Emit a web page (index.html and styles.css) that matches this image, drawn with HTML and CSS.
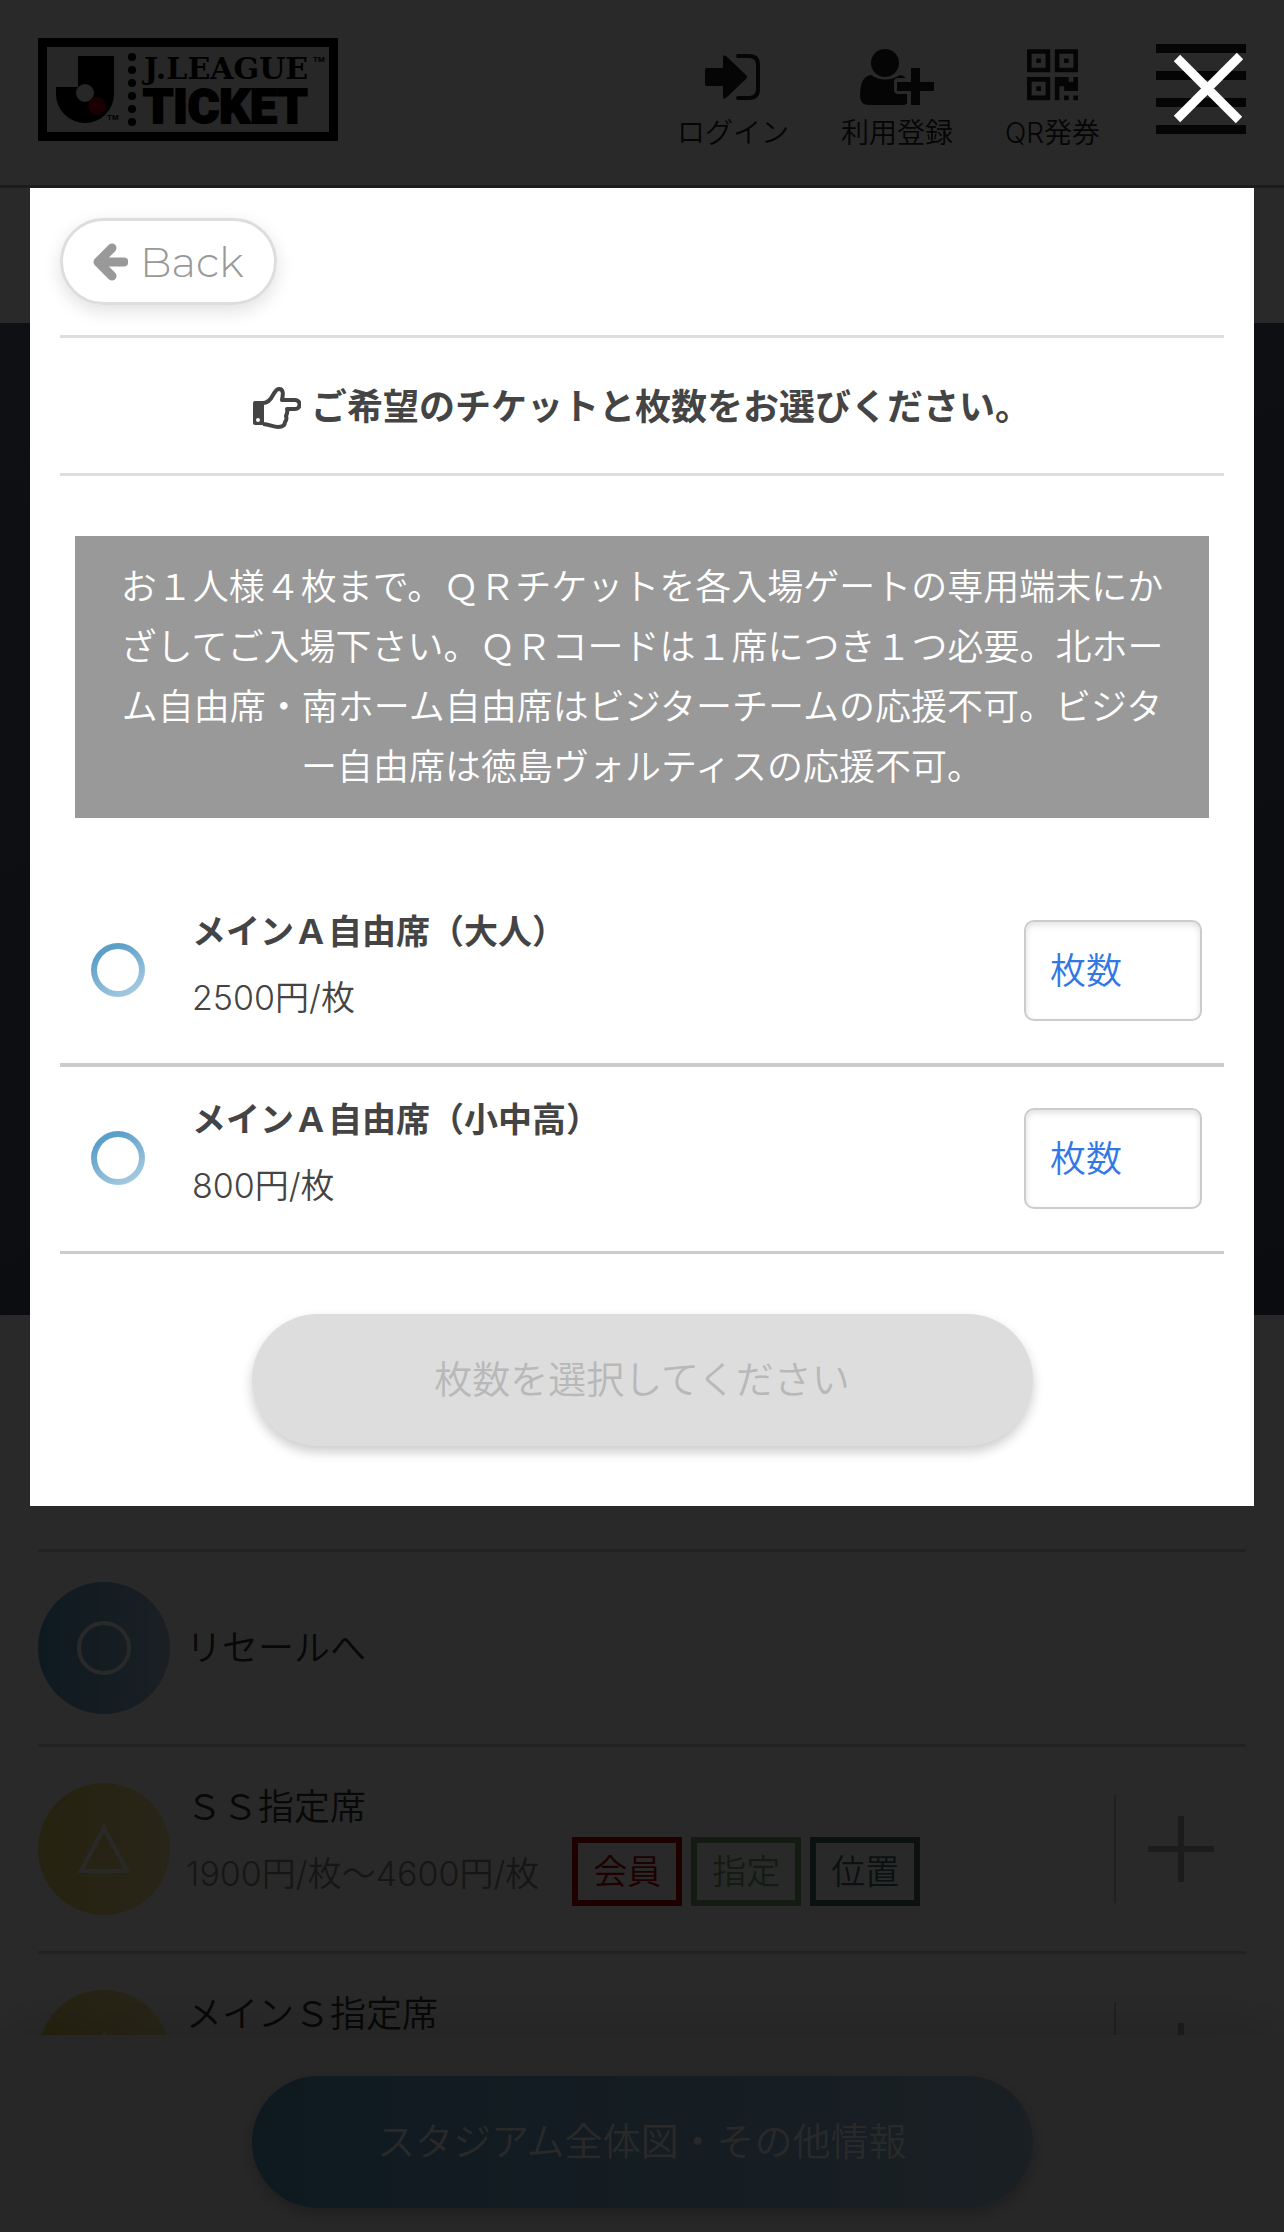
FILE: index.html
```html
<!DOCTYPE html>
<html lang="ja">
<head>
  <meta charset="UTF-8" />
  <meta name="viewport" content="width=device-width, initial-scale=1.0"/>
  <title>チケット選択 - J.LEAGUE TICKET</title>
  <link rel="stylesheet" href="styles.css">
</head>
<body>
  <header class="header">
    <a href="#" class="logo" aria-label="J.LEAGUE TICKET">
      <svg width="300" height="103" viewBox="0 0 300 103">
        <rect x="4.5" y="4.5" width="291" height="94" fill="#eee" stroke="#000" stroke-width="9"/>
        <path d="M40 18h36v38a29 29 0 0 1-58 0v-7h22z" fill="#000"/>
        <circle cx="47" cy="55" r="9" fill="#eee"/>
        <circle cx="59" cy="68" r="9" fill="#a00010"/>
        <g fill="#000">
          <circle cx="94" cy="19" r="4"/>
          <circle cx="94" cy="32" r="4"/>
          <circle cx="94" cy="45" r="4"/>
          <circle cx="94" cy="58" r="4"/>
          <circle cx="94" cy="71" r="4"/>
          <circle cx="94" cy="84" r="4"/>
        </g>
        <text x="69" y="82" class="logo-tm">TM</text>
        <text x="106" y="41" class="logo-league">J.LEAGUE</text>
        <text x="275" y="24" class="logo-tm">TM</text>
        <text x="105" y="85" class="logo-ticket">TICKET</text>
      </svg>
    </a>
    <nav class="nav">
      <a href="#" class="nav-item">
        <svg width="55" height="56" viewBox="0 -5 55 56">
          <path d="M2 14h16V3q0-3 3-1l20 19q2 2 0 4L21 44q-3 2-3-1V32H2q-2 0-2-2V16q0-2 2-2z"/>
          <path d="M33 2h11q9 0 9 9v24q0 9-9 9H33" fill="none" stroke="#222" stroke-width="4" stroke-linecap="round"/>
        </svg>
        <span>ログイン</span>
      </a>
      <a href="#" class="nav-item">
        <svg width="74" height="56" viewBox="0 0 74 56">
          <circle cx="25" cy="14" r="14"/>
          <path d="M11 26q14 9 29 0 3 0 6 3h-8q-4 0-4 4v8q0 4 4 4h9v10q-2 1-4 1H9q-9 0-9-9 0-20 11-21z"/>
          <path d="M51 19h9v14h14v9H60v14h-9V42H37v-9h14z"/>
        </svg>
        <span>利用登録</span>
      </a>
      <a href="#" class="nav-item">
        <svg width="51" height="56" viewBox="0 0 11 12">
          <path fill-rule="evenodd" d="M0 0h5v5H0zM1 1v3h3V1zM2 2h1v1H2zM6 0h5v5H6zM7 1v3h3V1zM8 2h1v1H8zM0 6h5v5H0zM1 7v3h3V7zM2 8h1v1H2zM11 6v3H8V8H7v3H6V6h3v1h1V6zM8 10h1v1H8zM10 10h1v1h-1z"/>
        </svg>
        <span>QR発券</span>
      </a>
      <button type="button" class="menu-btn" aria-label="メニュー">
        <span></span><span></span><span></span><span></span>
      </button>
    </nav>
  </header>

  <main>
    <div class="hero"></div>

    <ul class="seat-list">
      <li class="seat resale">
        <span class="mark mark-blue">
          <svg width="54" height="54" viewBox="0 0 54 54"><circle cx="27" cy="27" r="25"/></svg>
        </span>
        <div class="seat-info"><div class="seat-name">リセールへ</div></div>
      </li>
      <li class="seat">
        <span class="mark mark-yellow">
          <svg width="54" height="54" viewBox="0 0 54 54"><path d="M27 6 50 49H4z"/></svg>
        </span>
        <div class="seat-info">
          <div class="seat-name">ＳＳ指定席</div>
          <div class="seat-detail">
            <span class="seat-price">1900円/枚〜4600円/枚</span>
            <span class="tag tag-member">会員</span>
            <span class="tag tag-reserved">指定</span>
            <span class="tag tag-position">位置</span>
          </div>
        </div>
        <button type="button" class="expand" aria-label="開く">
          <svg width="66" height="66" viewBox="0 0 66 66"><path d="M33 0v66M0 33h66"/></svg>
        </button>
      </li>
      <li class="seat">
        <span class="mark mark-yellow">
          <svg width="54" height="54" viewBox="0 0 54 54"><path d="M27 6 50 49H4z"/></svg>
        </span>
        <div class="seat-info"><div class="seat-name">メインＳ指定席</div></div>
        <button type="button" class="expand" aria-label="開く">
          <svg width="66" height="66" viewBox="0 0 66 66"><path d="M33 0v66M0 33h66"/></svg>
        </button>
      </li>
    </ul>
  </main>

  <footer class="bottom-bar">
    <button type="button" class="btn btn-blue">スタジアム全体図・その他情報</button>
  </footer>

  <div class="overlay">
    <button type="button" class="close-btn" aria-label="閉じる">
      <svg width="74" height="74" viewBox="0 0 74 74"><path d="M5 6l62 62M68 4L5 67"/></svg>
    </button>

    <form class="modal" id="ticketForm">
      <div class="modal-top">
        <button type="button" class="back-btn">
          <svg width="35" height="38" viewBox="0 0 35 38">
            <path d="M19 5 5 19l14 14M7 19h24"/>
          </svg>
          Back
        </button>
      </div>

      <h2 class="modal-title">
        <svg width="48" height="42" viewBox="0 0 48 42">
          <path d="M2 14h9v24H2q-2 0-2-2V16q0-2 2-2z" fill="#444"/>
          <circle cx="5" cy="33" r="2" fill="#fff"/>
          <path d="M10 16c5 0 8-4 10-8 2-3 3-6 6-6 5 0 4 6 3 11h13c6 0 6 9 0 9h-8c1 3 0 5-1 7 1 3 0 5-1 6 0 4-3 5-7 5-5 0-9-3-15-3" fill="none" stroke="#444" stroke-width="4" stroke-linejoin="round"/>
        </svg>
        ご希望のチケットと枚数をお選びください。
      </h2>

      <p class="notice">お１人様４枚まで。ＱＲチケットを各入場ゲートの専用端末にかざしてご入場下さい。ＱＲコードは１席につき１つ必要。北ホーム自由席・南ホーム自由席はビジターチームの応援不可。ビジター自由席は徳島ヴォルティスの応援不可。</p>

      <div class="ticket">
        <input type="radio" name="ticket" id="adult" />
        <label for="adult">
          <span class="ticket-name">メインＡ自由席（大人）</span>
          <span class="ticket-price">2500円/枚</span>
        </label>
        <select aria-label="メインＡ自由席（大人）の枚数">
          <option>枚数</option>
          <option>1</option>
          <option>2</option>
          <option>3</option>
          <option>4</option>
        </select>
      </div>
      <div class="ticket">
        <input type="radio" name="ticket" id="child" />
        <label for="child">
          <span class="ticket-name">メインＡ自由席（小中高）</span>
          <span class="ticket-price">800円/枚</span>
        </label>
        <select aria-label="メインＡ自由席（小中高）の枚数">
          <option>枚数</option>
          <option>1</option>
          <option>2</option>
          <option>3</option>
          <option>4</option>
        </select>
      </div>

      <div class="modal-bottom">
        <button type="submit" class="btn" disabled>枚数を選択してください</button>
      </div>
    </form>
  </div>
</body>
</html>
```

FILE: styles.css
```css
* {
  box-sizing: border-box;
}
body {
  margin: 0;
  height: 100vh;
  overflow: hidden;
  background: #fff;
  color: #333;
  font-family: Inter, "Noto Sans CJK JP", sans-serif;
  font-size: 36px;
  font-weight: 350;
}
button, select {
  font: inherit;
  padding: 0;
  border: none;
  background: none;
  cursor: pointer;
}
svg {
  display: block;
  flex: none;
}

/* header */
.header {
  display: flex;
  justify-content: space-between;
  align-items: flex-start;
  height: 188px;
  padding: 38px 38px 0;
  border-bottom: 3px solid #b0b0b0;
}
.logo-league {
  font: bold 30px "DejaVu Serif", serif;
}
.logo-ticket {
  font: 900 48px Roboto, sans-serif;
  stroke: #000;
  stroke-width: 2;
}
.logo-tm {
  font: bold 8px "Liberation Sans", sans-serif;
}
.nav {
  display: flex;
  gap: 52px;
}
.nav-item {
  padding-top: 11px;
  color: #222;
  font-size: 28px;
  line-height: 28px;
  text-decoration: none;
}
.nav-item svg {
  margin: 0 auto 14px;
  fill: #222;
}
.menu-btn {
  display: flex;
  flex-direction: column;
  gap: 18px;
  width: 90px;
  margin-left: 4px;
  padding-top: 6px;
}
.menu-btn span {
  height: 9px;
  background: #222;
}

/* page behind the modal */
.hero {
  height: 992px;
  margin-top: 135px;
  background: linear-gradient(160deg, #5c6478, #484e60);
}
.seat-list {
  list-style: none;
  margin: 234px 38px 0;
  padding: 0;
  border-top: 3px solid #d0d0d0;
}
.seat {
  display: flex;
  align-items: flex-start;
  gap: 16px;
  padding: 36px 0;
  border-bottom: 3px solid #d0d0d0;
}
.resale {
  align-items: center;
  padding: 30px 0;
}
.mark {
  display: flex;
  align-items: center;
  justify-content: center;
  width: 132px;
  height: 132px;
  border-radius: 50%;
}
.mark svg {
  fill: none;
  stroke: #fff;
  stroke-width: 4;
}
.mark-blue {
  background: linear-gradient(90deg, #5a9fc8, #a5c4de);
}
.mark-yellow {
  background: linear-gradient(90deg, #ecd568, #f8e79c);
}
.seat-info {
  flex: 1;
}
.seat-name {
  line-height: 48px;
}
.seat-detail {
  display: flex;
  align-items: center;
  gap: 9px;
  margin-top: 6px;
}
.seat-price {
  margin-right: 24px;
  color: #888;
  font-size: 34px;
}
.tag {
  padding: 0 15px;
  border: 6px solid;
  font-size: 34px;
  line-height: 57px;
}
.tag-member {
  color: #b40000;
}
.tag-reserved {
  color: #7da872;
}
.tag-position {
  color: #44696c;
}
.expand {
  align-self: center;
  display: flex;
  align-items: center;
  height: 108px;
  padding: 0 32px;
  border-left: 2px solid #c4c4c4;
}
.expand svg {
  stroke: #b0b0b0;
  stroke-width: 6;
}
.bottom-bar {
  position: fixed;
  left: 0;
  right: 0;
  bottom: 0;
  padding: 41px 0 24px;
  background: #eee;
  box-shadow: 0 0 60px rgba(0,0,0,0.2);
  text-align: center;
}
.btn {
  width: 781px;
  max-width: 100%;
  height: 132px;
  padding-bottom: 8px;
  border-radius: 66px;
  font-size: 38px;
  box-shadow: 0 6px 12px rgba(0,0,0,0.2);
}
.btn-blue {
  display: block;
  margin: 0 auto;
  background: linear-gradient(90deg, #5a9fc8, #a5c4de);
  color: #fff;
}

/* modal */
.overlay {
  position: fixed;
  inset: 0;
  padding: 188px 30px 0;
  background: rgba(0,0,0,0.84);
}
.close-btn {
  position: absolute;
  top: 52px;
  right: 38px;
}
.close-btn svg {
  stroke: #fff;
  stroke-width: 9;
}
.modal {
  padding: 30px 30px 60px;
  background: #fff;
  color: #444;
}
.modal-top {
  padding-bottom: 30px;
  border-bottom: 3px solid #ddd;
}
.back-btn {
  display: flex;
  align-items: center;
  gap: 12px;
  height: 87px;
  padding: 0 30px;
  border: 3px solid #ddd;
  border-radius: 44px;
  box-shadow: 0 6px 18px rgba(0,0,0,0.12);
  color: #999;
  font-family: Montserrat, Inter, sans-serif;
  font-size: 42px;
  font-weight: 300;
}
.back-btn svg {
  fill: none;
  stroke: #999;
  stroke-width: 9;
  stroke-linecap: round;
  stroke-linejoin: round;
}
.modal-title {
  display: flex;
  align-items: center;
  justify-content: center;
  gap: 10px;
  margin: 0;
  padding-top: 4px;
  border-bottom: 3px solid #ddd;
  font-size: 36px;
  font-weight: bold;
  line-height: 131px;
}
.notice {
  margin: 60px 15px 61px;
  padding: 21px 30px;
  background: #999;
  color: #fff;
  line-height: 60px;
  text-align: center;
  line-break: loose;
}
.ticket {
  display: flex;
  align-items: center;
  padding: 20px 22px 22px 31px;
  border-bottom: 4px solid #ccc;
}
.ticket + .ticket {
  border-bottom-width: 3px;
}
.ticket input {
  appearance: none;
  width: 54px;
  height: 54px;
  margin: 0 47px 0 0;
  border: 6px solid transparent;
  border-radius: 50%;
  background: linear-gradient(#fff, #fff) padding-box, linear-gradient(150deg, #5a9fc8 20%, #b4d2e6) border-box;
}
.ticket label {
  flex: 1;
  padding-bottom: 10px;
  font-size: 34px;
  line-height: 66px;
}
.ticket-name, .ticket-price {
  display: block;
}
.ticket-name {
  font-weight: bold;
}
.ticket select {
  appearance: none;
  width: 178px;
  height: 101px;
  padding: 2px 24px 0;
  border: 2px solid #ccc;
  border-radius: 10px;
  background: #fff;
  box-shadow: inset 0 3px 6px rgba(0,0,0,0.12);
  color: #2f78e6;
}
.modal-bottom {
  padding-top: 60px;
}
.modal-bottom .btn {
  display: block;
  margin: 0 auto;
  background: #ddd;
  color: #b8b8b8;
}
```
